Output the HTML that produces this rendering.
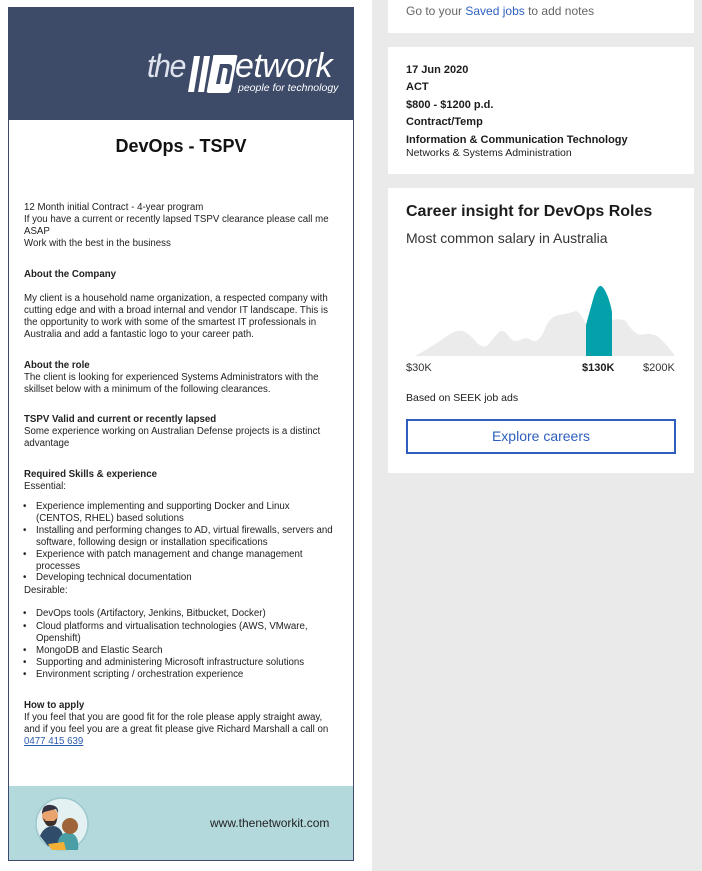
<!DOCTYPE html>
<html><head><meta charset="utf-8"><style>
*{margin:0;padding:0;box-sizing:border-box}
body{width:702px;height:871px;position:relative;overflow:hidden;background:#fff;font-family:"Liberation Sans",Arial,sans-serif;color:#1c1c1c}
.abs{position:absolute;white-space:nowrap}
.l{position:absolute;left:24px;font-size:9.7px;line-height:12px;white-space:nowrap;color:#222}
.b{font-weight:bold}
.bl{position:absolute;left:36px;font-size:9.7px;line-height:12px;white-space:nowrap;color:#222}
.bl:before{content:"•";position:absolute;left:-13px}
.card{position:absolute;left:388px;width:306px;background:#fff}
.r{position:absolute;left:406px;font-size:11px;line-height:13px;white-space:nowrap;color:#1c1c1c}
</style></head><body>
<div class="abs" style="left:372px;top:0;width:330px;height:871px;background:#eaeaea"></div>
<div class="abs" style="left:8px;top:7px;width:346px;height:854px;border:1px solid #3d4a6b;background:#fff"></div>
<div class="abs" style="left:8px;top:7px;width:346px;height:113px;background:#3d4a68"></div>
<!-- logo -->
<div class="abs" style="left:147px;top:48px;font-size:32px;font-style:italic;color:#dde2ec;letter-spacing:-1.5px;transform:scaleX(0.95);transform-origin:left">the</div>
<svg class="abs" style="left:186px;top:54px" width="52" height="40" viewBox="0 0 52 40">
<path d="M8 2 L14 2 L8 38 L2 38 Z" fill="#fff"/>
<path d="M18 2 L24 2 L18 38 L12 38 Z" fill="#fff"/>
<path d="M28 1 L50 1 Q52 1 51 4 L45 36 Q44 39 41 39 L23 39 Q20 39 21 36 L27 4 Q27 1 28 1 Z" fill="#fff"/>
<path d="M30 30 L34 10 L42 10 Q47 10 46 15 L43 30 L39 30 L41.5 17 Q42 14 39 14 L37 14 L34 30 Z" fill="#3d4a68"/>
</svg>
<div class="abs" style="left:235px;top:47px;font-size:34px;font-style:italic;color:#fff;letter-spacing:-0.5px">etwork</div>
<div class="abs" style="left:238px;top:82px;font-size:10.5px;font-style:italic;color:#fff">people for technology</div>
<div class="abs" style="left:8px;top:136px;width:346px;text-align:center;font-size:18px;font-weight:bold;color:#111">DevOps - TSPV</div>

<div class="l" style="top:202px">12 Month initial Contract - 4-year program</div>
<div class="l" style="top:214px">If you have a current or recently lapsed TSPV clearance please call me</div>
<div class="l" style="top:226px">ASAP</div>
<div class="l" style="top:238px">Work with the best in the business</div>
<div class="l b" style="top:269px">About the Company</div>
<div class="l" style="top:293px">My client is a household name organization, a respected company with</div>
<div class="l" style="top:305px">cutting edge and with a broad internal and vendor IT landscape. This is</div>
<div class="l" style="top:317px">the opportunity to work with some of the smartest IT professionals in</div>
<div class="l" style="top:329px">Australia and add a fantastic logo to your career path.</div>
<div class="l b" style="top:360px">About the role</div>
<div class="l" style="top:372px">The client is looking for experienced Systems Administrators with the</div>
<div class="l" style="top:384px">skillset below with a minimum of the following clearances.</div>
<div class="l b" style="top:414px">TSPV Valid and current or recently lapsed</div>
<div class="l" style="top:426px">Some experience working on Australian Defense projects is a distinct</div>
<div class="l" style="top:438px">advantage</div>
<div class="l b" style="top:469px">Required Skills &amp; experience</div>
<div class="l" style="top:481px">Essential:</div>
<div class="bl" style="top:501px">Experience implementing and supporting Docker and Linux</div>
<div class="l" style="top:513px;left:36px">(CENTOS, RHEL) based solutions</div>
<div class="bl" style="top:525px">Installing and performing changes to AD, virtual firewalls, servers and</div>
<div class="l" style="top:537px;left:36px">software, following design or installation specifications</div>
<div class="bl" style="top:549px">Experience with patch management and change management</div>
<div class="l" style="top:561px;left:36px">processes</div>
<div class="bl" style="top:572px">Developing technical documentation</div>
<div class="l" style="top:585px">Desirable:</div>
<div class="bl" style="top:608px">DevOps tools (Artifactory, Jenkins, Bitbucket, Docker)</div>
<div class="bl" style="top:621px">Cloud platforms and virtualisation technologies (AWS, VMware,</div>
<div class="l" style="top:633px;left:36px">Openshift)</div>
<div class="bl" style="top:645px">MongoDB and Elastic Search</div>
<div class="bl" style="top:657px">Supporting and administering Microsoft infrastructure solutions</div>
<div class="bl" style="top:669px">Environment scripting / orchestration experience</div>
<div class="l b" style="top:700px">How to apply</div>
<div class="l" style="top:712px">If you feel that you are good fit for the role please apply straight away,</div>
<div class="l" style="top:724px">and if you feel you are a great fit please give Richard Marshall a call on</div>
<div class="l" style="top:736px;color:#2a5db0;text-decoration:underline">0477 415 639</div>

<div class="abs" style="left:9px;top:786px;width:344px;height:74px;background:#b3d9dd"></div>
<svg class="abs" style="left:34px;top:796px" width="56" height="56" viewBox="0 0 56 56">
<circle cx="28" cy="28" r="26" fill="#e3f1f2" stroke="#9cc7cc" stroke-width="1.5"/>
<path d="M6 40 Q10 30 20 30 Q30 32 30 48 L14 50 Z" fill="#2f4c6b"/>
<circle cx="16" cy="20" r="8" fill="#e8a36f"/>
<path d="M8 18 Q8 8 17 9 Q25 10 24 17 L22 13 L10 16 Z" fill="#334"/>
<path d="M9 22 Q12 32 17 30 Q23 30 23 22 L20 25 L12 25 Z" fill="#3a2f2a"/>
<path d="M24 54 Q22 38 34 36 Q46 38 44 54 Z" fill="#4a9fa6"/>
<circle cx="36" cy="30" r="8" fill="#a0643a"/>
<path d="M14 48 L30 46 L32 54 L18 54 Z" fill="#f2b134"/>
</svg>
<div class="abs" style="left:210px;top:816px;font-size:12px;color:#222">www.thenetworkit.com</div>

<!-- right -->
<div class="card" style="top:0;height:33px"></div>
<div class="abs" style="left:406px;top:4px;font-size:12px;color:#666">Go to your <span style="color:#2e5fbf">Saved jobs</span> to add notes</div>
<div class="card" style="top:47px;height:127px"></div>
<div class="r b" style="top:64px">17 Jun 2020</div>
<div class="r b" style="top:81px">ACT</div>
<div class="r b" style="top:99px">$800 - $1200 p.d.</div>
<div class="r b" style="top:116px">Contract/Temp</div>
<div class="r b" style="top:134px">Information &amp; Communication Technology</div>
<div class="r" style="top:147px;font-size:10.5px">Networks &amp; Systems Administration</div>

<div class="card" style="top:188px;height:285px"></div>
<div class="r b" style="top:202px;font-size:16px;line-height:19px">Career insight for DevOps Roles</div>
<div class="r" style="top:230px;font-size:14px;line-height:17px;color:#333">Most common salary in Australia</div>
<svg class="abs" style="left:400px;top:280px" width="285" height="80" viewBox="400 280 285 80">
<path d="M415 356 Q430 348 450 334 Q457 330 463 331 Q470 334 477 343 Q483 348 487 346 Q495 336 500 331 Q505 330 510 338 Q515 343 520 340 Q527 336 533 341 Q540 343 546 326 Q552 315 560 315 Q570 313 576 311 Q580 312 586 324 L600 286 L612 320 Q620 318 626 321 Q632 332 640 335 Q650 332 657 336 Q665 342 675 356 Z" fill="#ebebeb"/>
<path d="M586 325 Q590 310 594 296 Q598 285 601 286 Q605 288 609 300 Q611 306 612 312 L612 356 L586 356 Z" fill="#05a1ab"/>
</svg>
<div class="r" style="top:362px;color:#333">$30K</div>
<div class="r b" style="left:582px;top:362px">$130K</div>
<div class="r" style="left:643px;top:362px;color:#333">$200K</div>
<div class="r" style="top:392px;font-size:10.5px">Based on SEEK job ads</div>
<div class="abs" style="left:406px;top:419px;width:270px;height:35px;border:2px solid #2e5fbf;text-align:center;line-height:31px;font-size:14px;color:#2e5fbf">Explore careers</div>
</body></html>
